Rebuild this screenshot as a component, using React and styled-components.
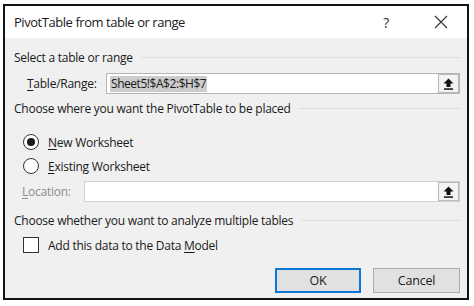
import React from "react";
import styled, { createGlobalStyle } from "styled-components";

const Global = createGlobalStyle`
  html, body { margin: 0; padding: 0; background: #fff; }
  body { font-family: "Open Sans", "Noto Sans", sans-serif; color: #1a1a1a; }
`;

const Page = styled.div`
  width: 474px;
  height: 306px;
  padding: 4px 0 0 3px;
  box-sizing: border-box;
  background: #fff;
`;

const Dialog = styled.div`
  width: 466px;
  height: 296px;
  box-sizing: border-box;
  border: 2px solid #141414;
  background: #f0f0f0;
  display: flex;
  flex-direction: column;
`;

const TitleBar = styled.div`
  height: 32px;
  background: #fff;
  display: flex;
  align-items: center;
  padding-left: 9px;
  font-size: 13px;
  letter-spacing: -0.45px;
  color: #1a1a1a;
`;

const TitleText = styled.span`
  flex: 1;
`;

const TitleButton = styled.span`
  width: ${p => p.$w}px;
  display: flex;
  justify-content: center;
  align-items: center;
  font-size: 14px;
  color: #333;
`;

const Body = styled.div`
  flex: 1;
  display: flex;
  flex-direction: column;
  padding: 0 7px 0 9px;
  font-size: 12px;
  letter-spacing: -0.25px;
`;

const Section = styled.div`
  margin-top: ${p => p.$mt}px;
  height: 18px;
  display: flex;
  align-items: center;
  gap: 8px;
  &::after {
    content: "";
    flex: 1;
    height: 1px;
    margin-top: 1px;
    background: #dedede;
  }
`;

const FieldRow = styled.div`
  margin-top: ${p => p.$mt}px;
  height: 21px;
  display: flex;
  align-items: center;
  padding-left: ${p => p.$indent}px;
`;

const FieldLabel = styled.span`
  width: ${p => p.$w}px;
  color: ${p => (p.$disabled ? "#8c8c8c" : "#1a1a1a")};
`;

const Input = styled.div`
  flex: 1;
  height: 21px;
  box-sizing: border-box;
  background: #fff;
  border: 1px solid ${p => (p.$disabled ? "#d0d0d0" : "#b4b4b4")};
  display: flex;
  align-items: center;
  padding-left: 3px;
`;

const Selected = styled.span`
  background: #cccccc;
  padding: 0 1px;
  line-height: 16px;
  letter-spacing: -0.45px;
`;

const Spacer = styled.span`
  flex: 1;
`;

const PickButton = styled.span`
  width: 21px;
  height: 19px;
  box-sizing: border-box;
  border: 1px solid #b9b9b9;
  background: #f3f3f3;
  display: flex;
  align-items: center;
  justify-content: center;
`;

const OptionRow = styled.label`
  margin-top: ${p => p.$mt}px;
  height: 22px;
  display: flex;
  align-items: center;
  padding-left: 9px;
  gap: 9px;
`;

const Radio = styled.span`
  width: 16px;
  height: 16px;
  box-sizing: border-box;
  border-radius: 50%;
  border: 1px solid #333;
  background: #fff;
  display: flex;
  align-items: center;
  justify-content: center;
  &::after {
    content: "";
    width: 8px;
    height: 8px;
    border-radius: 50%;
    background: ${p => (p.$checked ? "#1a1a1a" : "transparent")};
  }
`;

const Check = styled.span`
  width: 16px;
  height: 16px;
  box-sizing: border-box;
  border: 1px solid #333;
  background: #fff;
`;

const U = styled.span`
  text-decoration: underline;
  text-underline-offset: 2px;
`;

const ButtonRow = styled.div`
  margin-top: 12px;
  display: flex;
  justify-content: flex-end;
  gap: 12px;
`;

const Button = styled.button`
  width: ${p => p.$w}px;
  height: 25px;
  box-sizing: border-box;
  background: #e1e1e1;
  border: ${p => (p.$primary ? "2px solid #0a78d4" : "1px solid #adadad")};
  font-family: inherit;
  font-size: 12.5px;
  letter-spacing: -0.2px;
  color: #1a1a1a;
  padding: 0;
`;

const PickIcon = () => (
  <svg width="11" height="12" viewBox="0 0 11 12">
    <path d="M5.5 0.5 L10.5 5.5 L7.5 5.5 L7.5 9 L3.5 9 L3.5 5.5 L0.5 5.5 Z" fill="#111" />
    <rect x="1" y="10.3" width="9" height="1.5" fill="#111" />
  </svg>
);

const CloseIcon = () => (
  <svg width="14" height="14" viewBox="0 0 14 14">
    <path d="M1 1 L13 13 M13 1 L1 13" stroke="#333" strokeWidth="1.1" />
  </svg>
);

export default function App() {
  return (
    <Page>
      <Global />
      <Dialog>
        <TitleBar>
          <TitleText>PivotTable from table or range</TitleText>
          <TitleButton $w={58}>?</TitleButton>
          <TitleButton $w={52}><CloseIcon /></TitleButton>
        </TitleBar>
        <Body>
          <Section $mt={10}>Select a table or range</Section>
          <FieldRow $mt={7} $indent={13}>
            <FieldLabel $w={79}><U>T</U>able/Range:</FieldLabel>
            <Input>
              <Selected>Sheet5!$A$2:$H$7</Selected>
              <Spacer />
              <PickButton><PickIcon /></PickButton>
            </Input>
          </FieldRow>
          <Section $mt={5}>Choose where you want the PivotTable to be placed</Section>
          <OptionRow $mt={14}>
            <Radio $checked />
            <span><U>N</U>ew Worksheet</span>
          </OptionRow>
          <OptionRow $mt={2}>
            <Radio />
            <span><U>E</U>xisting Worksheet</span>
          </OptionRow>
          <FieldRow $mt={4} $indent={8}>
            <FieldLabel $w={62} $disabled><U>L</U>ocation:</FieldLabel>
            <Input $disabled>
              <Spacer />
              <PickButton><PickIcon /></PickButton>
            </Input>
          </FieldRow>
          <Section $mt={9}>Choose whether you want to analyze multiple tables</Section>
          <OptionRow $mt={5}>
            <Check />
            <span>Add this data to the Data <U>M</U>odel</span>
          </OptionRow>
          <ButtonRow>
            <Button $w={86} $primary>OK</Button>
            <Button $w={87}>Cancel</Button>
          </ButtonRow>
        </Body>
      </Dialog>
    </Page>
  );
}
